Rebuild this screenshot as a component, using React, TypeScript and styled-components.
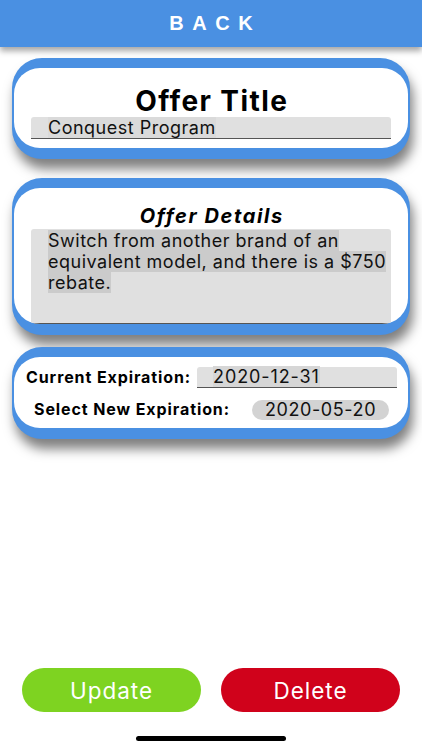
import React from "react";
import styled, { createGlobalStyle } from "styled-components";

const Global = createGlobalStyle`
  html, body { margin: 0; padding: 0; background: #ffffff; }
  body { font-family: Inter, "Liberation Sans", sans-serif; }
  * { box-sizing: border-box; }
`;

const Page = styled.div`
  height: 750px;
  display: flex;
  flex-direction: column;
  background: #ffffff;
  overflow: hidden;
`;

const Header = styled.div`
  height: 47px;
  flex: none;
  background: #4a90e2;
  display: flex;
  align-items: center;
  justify-content: center;
  box-shadow: 0 4px 6px rgba(0, 0, 0, 0.35);
  position: relative;
  z-index: 2;
`;

const BackText = styled.span`
  color: #ffffff;
  font-family: "Liberation Sans", Arial, sans-serif;
  font-weight: 700;
  font-size: 20px;
  letter-spacing: 8.5px;
  padding-left: 8.5px;
`;

const Card = styled.div<{ $top: number }>`
  margin: ${(p) => p.$top}px 12px 0 12px;
  background: #4a90e2;
  border-radius: 30px;
  padding: 10px 2px 11px 2px;
  box-shadow: 3px 10px 12px rgba(0, 0, 0, 0.5);
`;

const CardInner = styled.div<{ $h: number }>`
  background: #ffffff;
  border-radius: 26px;
  height: ${(p) => p.$h}px;
  display: flex;
  flex-direction: column;
  align-items: center;
  overflow: hidden;
`;

const Title = styled.div`
  font-family: Inter, "Liberation Sans", sans-serif;
  font-weight: 700;
  font-size: 28px;
  letter-spacing: 1.4px;
  padding-left: 1.4px;
  color: #000;
  margin-top: 17px;
  line-height: 32px;
`;

const DetailsTitle = styled.div`
  font-family: Inter, "Liberation Sans", sans-serif;
  font-weight: 700;
  font-style: italic;
  font-size: 20px;
  letter-spacing: 1.6px;
  padding-left: 1.6px;
  color: #000;
  margin-top: 16px;
  line-height: 24px;
`;

const Field = styled.div<{ $h: number; $mt: number }>`
  width: 360px;
  height: ${(p) => p.$h}px;
  margin-top: ${(p) => p.$mt}px;
  background: #e0e0e0;
  border-bottom: 1.5px solid #555;
  border-radius: 3px 3px 0 0;
  padding: 0 0 0 17px;
  font-family: Inter, "Open Sans", sans-serif;
  font-size: 18px;
  letter-spacing: 0.5px;
  color: #111;
  line-height: 21px;
`;

const Hl = styled.span<{ $c: string }>`
  background: ${(p) => p.$c};
`;

const DetailsField = styled(Field)`
  padding-top: 1px;
  line-height: 21px;
`;

const ExpInner = styled(CardInner)`
  align-items: stretch;
  padding-top: 10px;
  gap: 11px;
`;

const Row = styled.div<{ $pl: number }>`
  display: flex;
  align-items: center;
  padding-left: ${(p) => p.$pl}px;
  height: 21px;
`;

const Label = styled.div`
  font-family: Inter, "Liberation Sans", sans-serif;
  font-weight: 700;
  font-size: 16px;
  letter-spacing: 0.9px;
  line-height: 18px;
  margin-top: -2px;
  color: #000;
  white-space: nowrap;
`;

const DateField = styled.div`
  margin-left: auto;
  margin-right: 11px;
  width: 200px;
  height: 21px;
  background: #e0e0e0;
  border-bottom: 1.5px solid #555;
  border-radius: 3px 3px 0 0;
  padding-left: 16px;
  font-family: Inter, "Open Sans", sans-serif;
  font-size: 18px;
  letter-spacing: 0.9px;
  line-height: 20px;
  color: #111;
`;

const Pill = styled.div`
  margin-left: auto;
  margin-right: 19px;
  width: 137px;
  height: 20px;
  border-radius: 10px;
  background: #d3d3d3;
  display: flex;
  align-items: center;
  justify-content: center;
  font-family: Inter, "Open Sans", sans-serif;
  font-size: 18px;
  letter-spacing: 0.6px;
  color: #111;
`;

const Spacer = styled.div`
  flex: 1;
`;

const ButtonRow = styled.div`
  display: flex;
  gap: 20px;
  padding: 0 22px;
  margin-bottom: 24px;
`;

const Btn = styled.button<{ $bg: string }>`
  flex: 1;
  height: 44px;
  border: none;
  border-radius: 22px;
  background: ${(p) => p.$bg};
  color: #ffffff;
  font-family: Inter, "Open Sans", sans-serif;
  font-size: 22.5px;
  letter-spacing: 1px;
  font-weight: 400;
  cursor: pointer;
`;

const HomeBar = styled.div`
  width: 150px;
  height: 5px;
  border-radius: 3px;
  background: #000;
  margin: 0 auto 9px auto;
`;

export default function App() {
  return (
    <>
      <Global />
      <Page>
        <Header>
          <BackText>BACK</BackText>
        </Header>

        <Card $top={11}>
          <CardInner $h={80}>
            <Title>Offer Title</Title>
            <Field $h={22} $mt={0}>
              <Hl $c="#dadada">Conquest Program</Hl>
            </Field>
          </CardInner>
        </Card>

        <Card $top={19}>
          <CardInner $h={136}>
            <DetailsTitle>Offer Details</DetailsTitle>
            <DetailsField $h={95} $mt={1}>
              <Hl $c="#cbcbcb">
                Switch from another brand of an equivalent model, and there is a $750 rebate.
              </Hl>
            </DetailsField>
          </CardInner>
        </Card>

        <Card $top={12}>
          <ExpInner $h={71}>
            <Row $pl={12}>
              <Label>Current Expiration:</Label>
              <DateField>
                <Hl $c="#d6d6d6">2020-12-31</Hl>
              </DateField>
            </Row>
            <Row $pl={20}>
              <Label>Select New Expiration:</Label>
              <Pill>2020-05-20</Pill>
            </Row>
          </ExpInner>
        </Card>

        <Spacer />

        <ButtonRow>
          <Btn $bg="#7ed321">Update</Btn>
          <Btn $bg="#d0021b">Delete</Btn>
        </ButtonRow>
        <HomeBar />
      </Page>
    </>
  );
}
